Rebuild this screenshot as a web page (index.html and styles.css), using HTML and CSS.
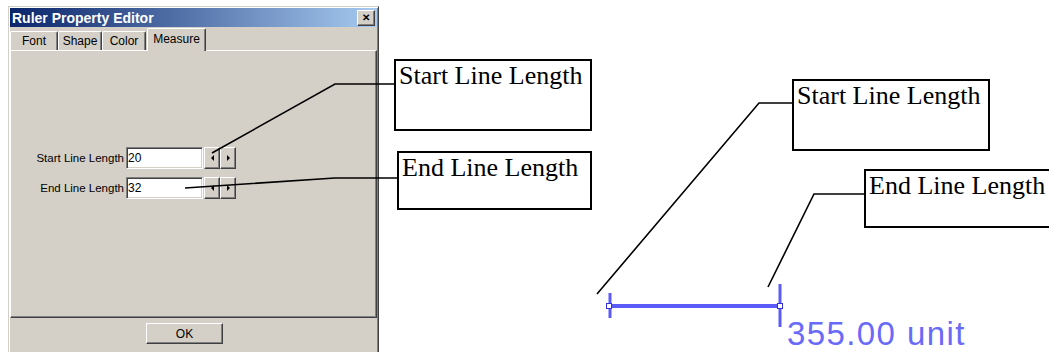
FILE: index.html
```html
<!DOCTYPE html>
<html lang="en">
<head>
    <meta charset="UTF-8">
    <title>Ruler Property Editor</title>
    <link rel="stylesheet" href="styles.css">
</head>
<body>

<div class="canvas">
    <div class="dialog">
        <div class="titlebar">
            <span class="title">Ruler Property Editor</span>
            <span class="close">&#x2715;</span>
        </div>

        <div class="tabs">
            <span class="tab tab-font">Font</span>
            <span class="tab tab-shape">Shape</span>
            <span class="tab tab-color">Color</span>
            <span class="tab tab-measure active">Measure</span>
        </div>

        <div class="page">
            <div class="form">
                <div class="row">
                    <label>Start Line Length</label>
                    <input type="text" value="20">
                    <div class="spin">
                        <button class="left"></button>
                        <button class="right"></button>
                    </div>
                </div>
                <div class="row">
                    <label>End Line Length</label>
                    <input type="text" value="32">
                    <div class="spin">
                        <button class="left"></button>
                        <button class="right"></button>
                    </div>
                </div>
            </div>
        </div>

        <div class="footer">
            <button class="ok">OK</button>
        </div>
    </div>

    <!-- callout leader lines and the ruler preview -->
    <svg class="overlay" width="1049" height="352" viewBox="0 0 1049 352">
        <g class="leader">
            <polyline points="212,153 335,84 395,84"/>
            <polyline points="185,188 335,178 397,178"/>
            <polyline points="597,294 759,103 792,103"/>
            <polyline points="768,287 814,194 864,194"/>
        </g>
        <g class="ruler">
            <line x1="609" y1="306" x2="780" y2="306" class="bar"/>
            <line x1="610" y1="293" x2="610" y2="318" class="tick"/>
            <line x1="780" y1="284" x2="780" y2="327" class="tick"/>
            <rect x="606.5" y="303.5" width="5" height="5" class="handle"/>
            <rect x="777.5" y="303.5" width="5" height="5" class="handle"/>
            <text x="787" y="345" class="unit">355.00 unit</text>
        </g>
    </svg>

    <div class="callout c1">Start Line Length</div>
    <div class="callout c2">End Line Length</div>
    <div class="callout c3">Start Line Length</div>
    <div class="callout c4">End Line Length</div>
</div>

</body>
</html>
```

FILE: styles.css
```css
body {
    margin: 0;
    padding: 0;
    background: #ffffff;
    font-family: 'Liberation Sans', Arial, sans-serif;
}
.canvas {
    position: relative;
    width: 1049px;
    height: 352px;
    overflow: hidden;
}

/* dialog window */
.dialog {
    margin: 6px 0 0 8px;
    width: 367px;
    height: 346px;
    padding: 1px;
    background: #d4d0c8;
    border: 1px solid;
    border-color: #d4d0c8 #404040 #404040 #d4d0c8;
    box-shadow: inset 1px 1px #ffffff, inset -1px -1px #808080;
    display: flex;
    flex-direction: column;
}
.titlebar {
    height: 19px;
    background: linear-gradient(to right, #0a246a, #a6caf0);
    display: flex;
    align-items: center;
    justify-content: space-between;
    padding: 0 2px 0 2px;
}
.title {
    color: #ffffff;
    font-weight: bold;
    font-size: 14px;
}
.close {
    width: 16px;
    height: 14px;
    background: #d4d0c8;
    border: 1px solid;
    border-color: #ffffff #404040 #404040 #ffffff;
    box-shadow: inset -1px -1px #808080;
    font-size: 10px;
    font-weight: bold;
    line-height: 14px;
    text-align: center;
    color: #000;
}

/* tabs */
.tabs {
    height: 23px;
    display: flex;
    align-items: flex-end;
    position: relative;
    z-index: 1;
}
.tab {
    box-sizing: border-box;
    height: 19px;
    font-size: 12px;
    line-height: 18px;
    text-align: center;
    color: #000;
    background: #d4d0c8;
    border-top: 1px solid #ffffff;
    border-left: 1px solid #ffffff;
    border-right: 1px solid #404040;
    box-shadow: inset -1px 0 #808080;
    border-radius: 2px 2px 0 0;
}
.tab-font { width: 48px; }
.tab-shape { width: 44px; }
.tab-color { width: 44px; }
.tab-measure { width: 59px; }
.tab.active {
    height: 23px;
    margin-bottom: -1px;
    line-height: 20px;
    margin-left: 1px;
}

/* tab page */
.page {
    height: 266px;
    border: 1px solid;
    border-color: #ffffff #404040 #404040 #ffffff;
    box-shadow: inset -1px -1px #808080;
}
.form {
    padding-top: 96px;
    display: flex;
    flex-direction: column;
    gap: 8px;
}
.row {
    display: flex;
    align-items: center;
}
.row label {
    width: 113px;
    margin-right: 2px;
    text-align: right;
    font-size: 11.5px;
    color: #000;
}
.row input {
    box-sizing: border-box;
    width: 77px;
    height: 22px;
    margin: 0;
    padding: 0 1px;
    font-family: 'Liberation Sans', Arial, sans-serif;
    font-size: 12px;
    color: #000;
    background: #ffffff;
    border: 1px solid;
    border-color: #808080 #ffffff #ffffff #808080;
    box-shadow: inset 1px 1px #404040, inset -1px -1px #d4d0c8;
    outline: none;
}
.spin {
    display: flex;
    margin-left: 1px;
}
.spin button {
    box-sizing: border-box;
    width: 16px;
    height: 22px;
    padding: 0;
    background: #d4d0c8;
    border: 1px solid;
    border-color: #ffffff #404040 #404040 #ffffff;
    box-shadow: inset -1px -1px #808080;
    display: flex;
    align-items: center;
    justify-content: center;
}
.spin button::after {
    content: "";
    width: 0;
    height: 0;
    border-top: 3px solid transparent;
    border-bottom: 3px solid transparent;
}
.spin .left::after {
    border-right: 3px solid #000;
}
.spin .right::after {
    border-left: 3px solid #000;
}

/* bottom button bar */
.footer {
    flex: 1;
    padding: 5px 0 0 136px;
}
.ok {
    box-sizing: border-box;
    width: 77px;
    height: 21px;
    padding: 0;
    font-family: 'Liberation Sans', Arial, sans-serif;
    font-size: 12px;
    color: #000;
    background: #d4d0c8;
    border: 1px solid;
    border-color: #ffffff #404040 #404040 #ffffff;
    box-shadow: inset -1px -1px #808080;
}

/* annotations */
.overlay {
    position: absolute;
    left: 0;
    top: 0;
    pointer-events: none;
}
.leader polyline {
    fill: none;
    stroke: #000;
    stroke-width: 1.6;
}
.ruler .bar {
    stroke: #5b5bf7;
    stroke-width: 4;
}
.ruler .tick {
    stroke: #5b5bf7;
    stroke-width: 3;
}
.ruler .handle {
    fill: #ffffff;
    stroke: #3030e0;
    stroke-width: 1;
}
.ruler .unit {
    fill: #6a6af8;
    font-family: 'Liberation Sans', Arial, sans-serif;
    font-size: 33px;
    letter-spacing: 1.4px;
}
.callout {
    position: absolute;
    box-sizing: border-box;
    border: 2px solid #000;
    background: #ffffff;
    padding: 2px 2px 0 3px;
    font-family: 'Liberation Serif', 'Times New Roman', serif;
    font-size: 26px;
    line-height: 26px;
    color: #000;
    white-space: nowrap;
}
.c1 { left: 394px; top: 59px; width: 198px; height: 72px; }
.c2 { left: 397px; top: 151px; width: 195px; height: 59px; }
.c3 { left: 792px; top: 79px; width: 198px; height: 72px; }
.c4 { left: 864px; top: 169px; width: 200px; height: 59px; }
```
